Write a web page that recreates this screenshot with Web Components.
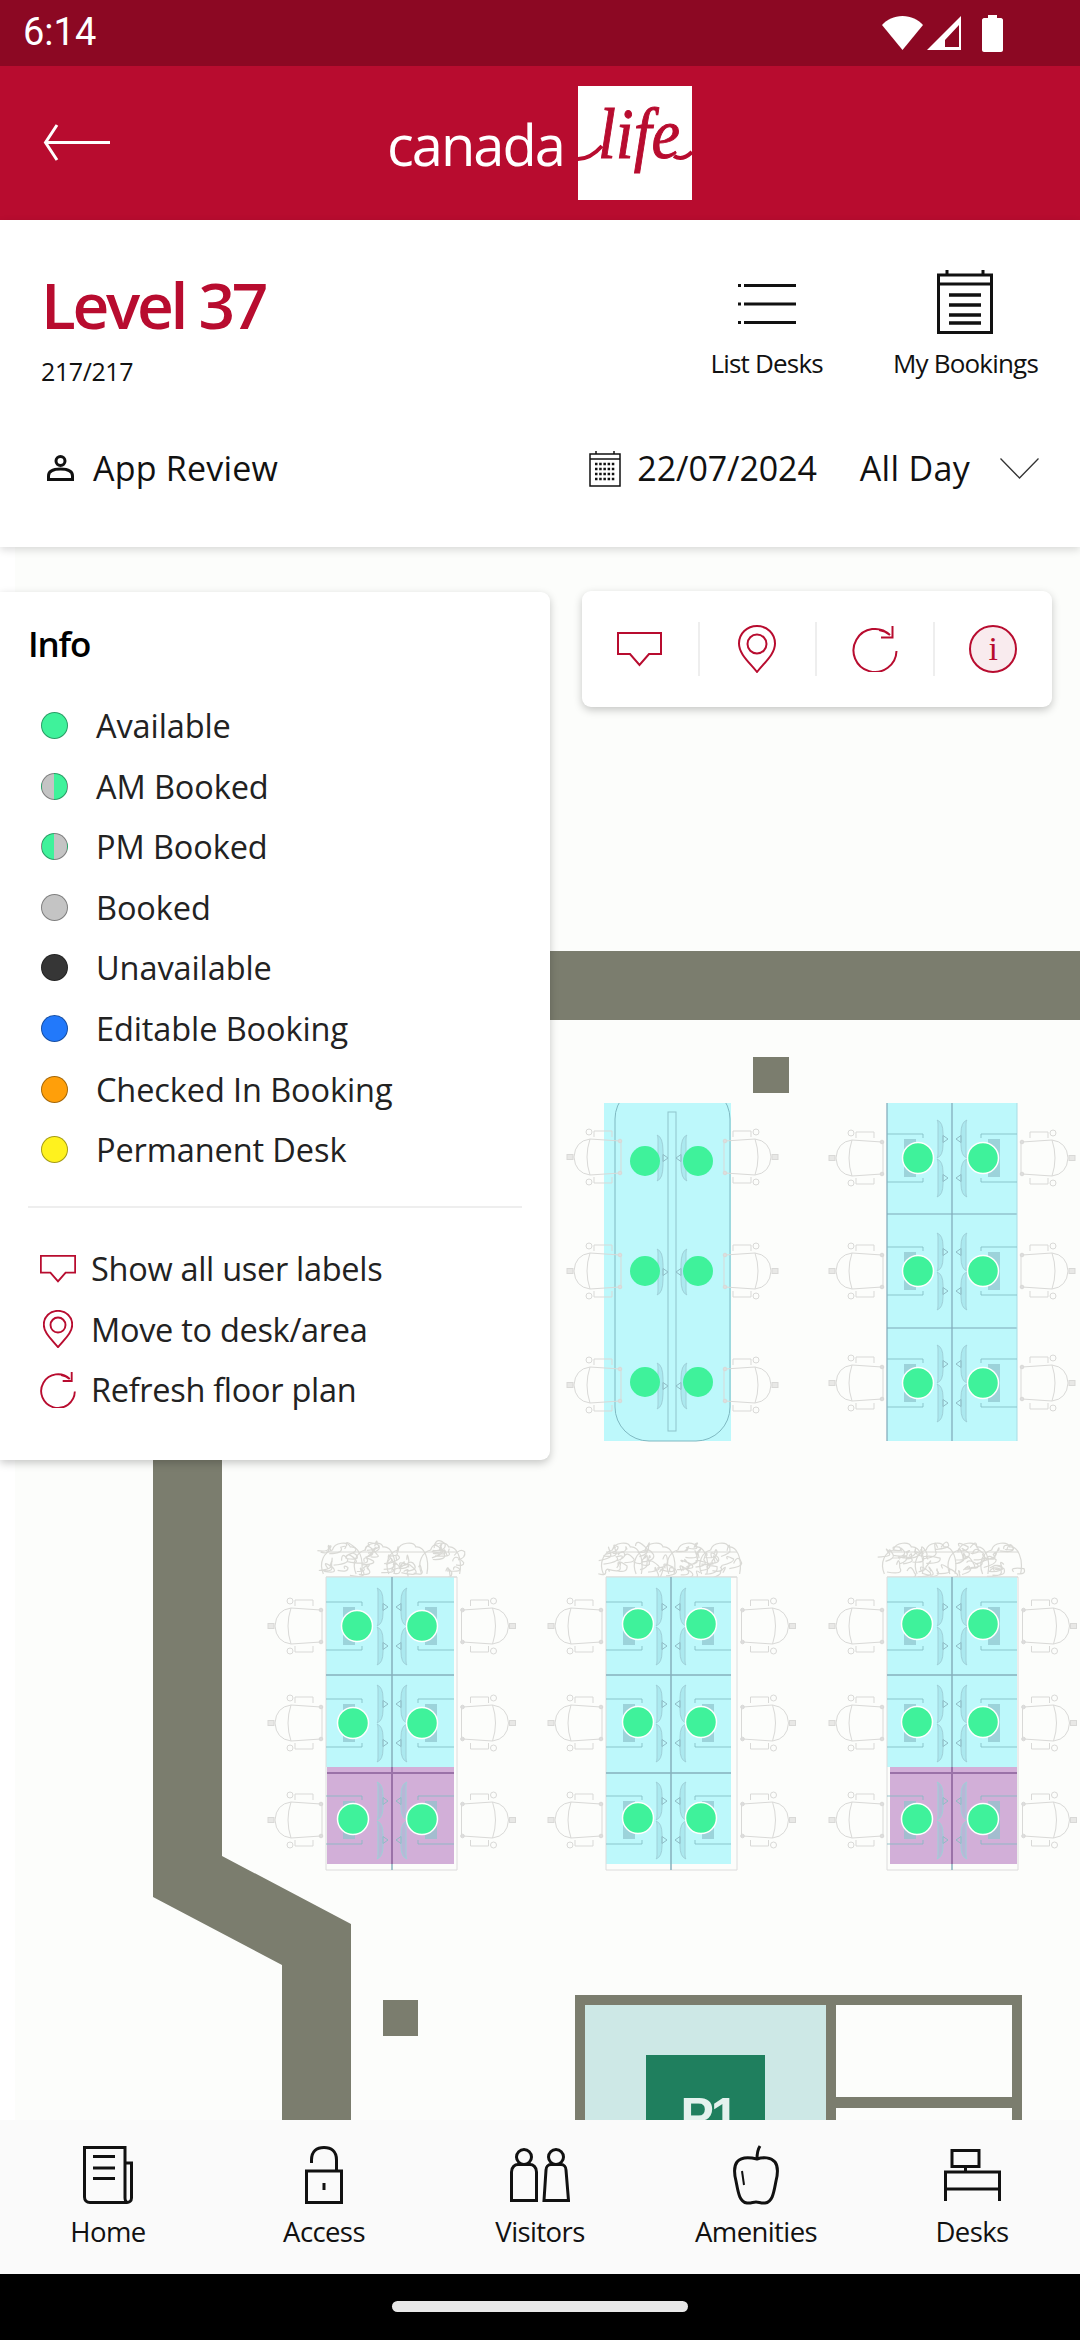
<!DOCTYPE html>
<html>
<head>
<meta charset="utf-8">
<style>
  html, body { margin: 0; padding: 0; background: #fff; }
  body { width: 1080px; height: 2340px; overflow: hidden; font-family: "Open Sans", "Noto Sans", sans-serif; }
  app-shell { --red: #b80c2f; }
</style>
</head>
<body>
<app-shell>
  <status-bar slot="top"></status-bar>
  <app-header slot="top"></app-header>
  <level-panel slot="top"></level-panel>
  <floor-map slot="map">
    <info-panel>
      <legend-row kind="available">Available</legend-row>
      <legend-row kind="am">AM Booked</legend-row>
      <legend-row kind="pm">PM Booked</legend-row>
      <legend-row kind="booked">Booked</legend-row>
      <legend-row kind="unavailable">Unavailable</legend-row>
      <legend-row kind="editable">Editable Booking</legend-row>
      <legend-row kind="checked">Checked In Booking</legend-row>
      <legend-row kind="permanent">Permanent Desk</legend-row>
    </info-panel>
    <map-toolbar></map-toolbar>
  </floor-map>
  <bottom-nav slot="bottom"></bottom-nav>
  <gesture-bar slot="bottom"></gesture-bar>
</app-shell>

<script>
const TEXT_FONT = '"Open Sans", "Noto Sans", sans-serif';

const ICONS = {
  bubble: '<svg viewBox="0 0 45 35" width="45" height="35" fill="none" stroke="#b80c2f" stroke-width="2"><path d="M1 1H44V22H32L22.500 33L13 22H1Z"/></svg>',
  pin: '<svg viewBox="0 0 38 48" width="38" height="48" fill="none" stroke="#b80c2f" stroke-width="2"><path d="M19 47C11 37 1 29 1 18.500C1 8.500 9 1 19 1S37 8.500 37 18.500C37 29 27 37 19 47Z"/><circle cx="19" cy="19" r="9.500"/></svg>',
  refresh: '<svg viewBox="0 0 46 46" width="46" height="46" fill="none" stroke="#b80c2f" stroke-width="2"><path d="M44.500 25A21.500 21.500 0 1 1 38 9C35 6.500 31 4.500 27 4"/><path d="M40.500 0V11.500H29"/></svg>'
};

class AppShell extends HTMLElement {
  constructor() {
    super();
    this.attachShadow({ mode: 'open' });
    this.shadowRoot.innerHTML = `
      <style>
        :host { display: flex; flex-direction: column; width: 1080px; height: 2340px; }
        .top { flex: none; position: relative; z-index: 3; }
        .map { flex: 1; min-height: 0; display: flex; position: relative; z-index: 1; }
        .bottom { flex: none; position: relative; z-index: 2; }
      </style>
      <div class="top"><slot name="top"></slot></div>
      <div class="map"><slot name="map"></slot></div>
      <div class="bottom"><slot name="bottom"></slot></div>
    `;
  }
}

class StatusBar extends HTMLElement {
  constructor() {
    super();
    this.attachShadow({ mode: 'open' });
    this.shadowRoot.innerHTML = `
      <style>
        :host { display: flex; align-items: center; justify-content: space-between; height: 66px; background: #8c0823; color: #fff; padding: 0 77px 0 23px; box-sizing: border-box; }
        .time { font: 400 38px Roboto, sans-serif; position: relative; top: -1px; }
        .icons { display: flex; align-items: center; gap: 4px; }
        svg { display: block; }
      </style>
      <span class="time">6:14</span>
      <div class="icons">
        <svg width="41" height="34" viewBox="0 0 41 34" fill="#fff"><path d="M20.500 34L0 9C5 3.500 12 0 20.500 0S36 3.500 41 9Z"/></svg>
        <svg width="35" height="34" viewBox="0 0 35 34" fill="#fff" fill-rule="evenodd"><path d="M34 0V34H0ZM32 9L18 24V31H32Z"/></svg>
        <svg width="21" height="37" viewBox="0 0 21 37" fill="#fff" style="margin-left:16px"><path d="M6 0H15V3H19C20 3 21 4 21 5V35C21 36 20 37 19 37H2C1 37 0 36 0 35V5C0 4 1 3 2 3H6Z"/></svg>
      </div>
    `;
  }
}

class AppHeader extends HTMLElement {
  constructor() {
    super();
    this.attachShadow({ mode: 'open' });
    this.shadowRoot.innerHTML = `
      <style>
        :host { display: flex; align-items: center; height: 154px; background: var(--red); padding-left: 43px; box-sizing: border-box; position: relative; }
        .logo { display: flex; align-items: center; margin-left: 277px; gap: 14px; }
        .word { font: 500 56px ${TEXT_FONT}; color: #fff; position: relative; top: 1px; letter-spacing: -2px; }
        svg { display: block; }
      </style>
      <svg width="67" height="38" viewBox="0 0 67 38" fill="none" stroke="#fff" stroke-width="3"><path d="M67 18.500H3M14 1L2.500 18.500L14 36"/></svg>
      <div class="logo">
        <span class="word">canada</span>
        <svg width="114" height="114" viewBox="0 0 114 114">
          <rect width="114" height="114" fill="#fff"/>
          <path d="M0 73C9 73 16 69 24 60M96 70C102 74 108 72 114 66" fill="none" stroke="#b80c2f" stroke-width="4"/>
          <text x="20" y="72" font-family="Liberation Serif, serif" font-style="italic" font-size="72" fill="#b80c2f" stroke="#b80c2f" stroke-width="1" textLength="82" lengthAdjust="spacingAndGlyphs">life</text>
        </svg>
      </div>
    `;
  }
}

class LevelPanel extends HTMLElement {
  constructor() {
    super();
    this.attachShadow({ mode: 'open' });
    this.shadowRoot.innerHTML = `
      <style>
        :host { display: flex; flex-direction: column; height: 327px; background: #fff; box-sizing: border-box; box-shadow: 0 3px 8px rgba(0,0,0,.14); position: relative; color: #111; font-family: ${TEXT_FONT}; }
        .head { display: flex; justify-content: space-between; padding: 49px 42px 0 41px; height: 221px; box-sizing: border-box; }
        h1 { margin: 0; font-size: 64px; font-weight: 600; color: var(--red); line-height: 72px; letter-spacing: -3.300px; }
        .count { font-size: 25px; line-height: 32px; margin-top: 14px; letter-spacing: -.4px; }
        .actions { display: flex; gap: 70px; align-items: flex-start; }
        .action { display: flex; flex-direction: column; align-items: center; font-size: 26px; letter-spacing: -.8px; white-space: nowrap; }
        .action .ico { height: 65px; display: flex; align-items: center; margin-bottom: 11px; }
        .list { position: relative; top: 2px; }
        .row { display: flex; align-items: center; padding: 0 41px 0 47px; height: 54px; font-size: 34px; }
        .person { margin-right: 19px; }
        .review { letter-spacing: .2px; }
        .cal { margin-left: auto; margin-right: 16px; }
        .date { margin-right: 43px; letter-spacing: -.1px; }
        .day { letter-spacing: .3px; }
        .chev { margin-left: 30px; }
        svg { display: block; }
      </style>
      <div class="head">
        <div>
          <h1>Level 37</h1>
          <div class="count">217/217</div>
        </div>
        <div class="actions">
          <div class="action">
            <div class="ico">
              <svg class="list" width="58" height="40" viewBox="0 0 58 40" stroke="#111" stroke-width="3"><path d="M6 1.500H58M6 20H58M6 38.500H58M0 1.500H3M0 20H3M0 38.500H3"/></svg>
            </div>
            List Desks
          </div>
          <div class="action">
            <div class="ico">
              <svg width="56" height="64" viewBox="0 0 56 64" fill="none" stroke="#111" stroke-width="3"><path d="M1.500 5H54.500V62.500H1.500ZM1.500 14H54.500M10 0V5M46 0V5"/><path d="M12 25H44M12 35H44M12 45H44M12 53H44" stroke-width="3.500"/></svg>
            </div>
            My Bookings
          </div>
        </div>
      </div>
      <div class="row">
        <svg class="person" width="27" height="26" viewBox="0 0 27 26" fill="none" stroke="#111" stroke-width="3"><circle cx="13.500" cy="6" r="4.500"/><path d="M1.500 24.500V21C1.500 16 7 14 13.500 14S25.500 16 25.500 21V24.500Z"/></svg>
        <span class="review">App Review</span>
        <svg class="cal" width="32" height="37" viewBox="0 0 32 37" fill="none" stroke="#111" stroke-width="1.500"><path d="M1 4H31V36H1ZM1 9H31M7 1V4M25 1V4"/><path d="M6 14H26M6 19H26M6 24H26M6 29H26" stroke-width="2.500" stroke-dasharray="2.500 1.700"/></svg>
        <span class="date">22/07/2024</span>
        <span class="day">All Day</span>
        <svg class="chev" width="39" height="21" viewBox="0 0 39 21" fill="none" stroke="#333" stroke-width="1.300"><path d="M.5 .5L19.500 20L38.500 .5"/></svg>
      </div>
    `;
  }
}

// The plan is drawn in page coordinates, the viewBox starts at the top of the map (547).
function chair(x, y, flip) {
  const t = flip ? `translate(${x + 55} ${y}) scale(-1 1)` : `translate(${x} ${y})`;
  return `<use href="#chair" transform="${t}"/>`;
}

function monitor(cx, y, h, side) {
  // a thin curved screen and its stand, side -1 = left of the center line
  const a = cx + side * 14, b = cx + side * 9, m = y + h / 2;
  return `<path d="M${a} ${y + 4}Q${a} ${y} ${a + side} ${y}Q${b} ${y + 2} ${b} ${y + h * .35}V${y + h * .65}Q${b} ${y + h - 2} ${a + side} ${y + h}Q${a} ${y + h} ${a} ${y + h - 4}Z" fill="rgba(130,200,212,.3)" stroke="#9fd0d8" stroke-width="1"/>
    <path d="M${b} ${m - 3.500}V${m + 3.500}L${cx + side * 4} ${m}Z" fill="none" stroke="#8fbcc6" stroke-width="1"/>`;
}

function deskBlock(cx, left, right, cy) {
  // desk frames, phone pads and four screens of one desk row
  const top = cy - 24, bot = cy + 24;
  return `
    <path d="M${left} ${top}H${left + 36}V${top + 4}M${left} ${bot}H${left + 36}V${bot - 4}M${right} ${top}H${right - 36}V${top + 4}M${right} ${bot}H${right - 36}V${bot - 4}" fill="none" stroke="#7fb9c2" stroke-width="1" opacity=".8"/>
    <rect x="${left + 17}" y="${cy - 19}" width="12" height="38" fill="#8fc3cc" opacity=".7"/>
    <rect x="${right - 29}" y="${cy - 19}" width="12" height="38" fill="#8fc3cc" opacity=".7"/>
    ${monitor(cx, cy - 38, 38, -1)}${monitor(cx, cy + 1, 38, -1)}${monitor(cx, cy - 38, 38, 1)}${monitor(cx, cy + 1, 38, 1)}`;
}

// scribbled leaves over a planter box, seeded so every run draws the same
let seed = 17;
function rnd(n) {
  seed = (seed * 1103 + 12345) % 65536;
  return seed / 65536 * n;
}

function plants(left, right) {
  let s = `<path d="M${left} 1552H${right}M${left} 1577H${right}" stroke="#d8d8d4" stroke-width="1"/>`;
  for (let i = 0; i < 4; i++) {
    const cx = left + (right - left) * (i + .5) / 4;
    let d = '';
    for (let k = 0; k < 11; k++) {
      const x = cx - 15 + rnd(30), y = 1546 + rnd(27);
      d += `M${x.toFixed(1)} ${y.toFixed(1)}q${(rnd(14) - 7).toFixed(1)} ${(-4 - rnd(7)).toFixed(1)} ${(rnd(16) - 4).toFixed(1)} ${(rnd(8) - 4).toFixed(1)}q${(rnd(6)).toFixed(1)} ${(3 + rnd(5)).toFixed(1)} ${(-6 - rnd(8)).toFixed(1)} ${(2 + rnd(6)).toFixed(1)}`;
    }
    s += `<path d="${d}" fill="none" stroke="#d9d9d5" stroke-width="1.200"/>`;
    s += `<path d="M${cx - 19} 1574C${cx - 24} 1562 ${cx - 18} 1552 ${cx - 10} 1550C${cx - 8} 1542 ${cx + 6} 1541 ${cx + 8} 1547C${cx + 16} 1546 ${cx + 22} 1558 ${cx + 19} 1574" fill="none" stroke="#d9d9d5" stroke-width="1.200"/>`;
  }
  return s;
}

function dot(x, y, plain) {
  if (plain) return `<circle cx="${x}" cy="${y}" r="15" fill="#3ff29b"/>`;
  return `<circle cx="${x}" cy="${y}" r="15.500" fill="#3ff29b" stroke="#fff" stroke-width="1.500"/>`;
}

function lowerCluster(left, right, cx, cyanL, cyanR, purple, dots) {
  const ys = [1626, 1723, 1820];
  let s = plants(left, right);
  const w = cyanR - cyanL;
  s += `<rect x="${purple ? left : cyanL}" y="1577" width="${purple ? cyanR - left : w}" height="${purple ? 190 : 287}" fill="#bdf8fb"/>`;
  if (purple) s += `<rect x="${cyanL}" y="1767" width="${w}" height="97" fill="#d2afd8"/>`;
  s += `<path d="M${left} 1577H${right}M${left} 1870H${right}M${left} 1577V1870M${right} 1577V1870" stroke="#dcdcdc" stroke-width="1" fill="none"/>`;
  s += `<path d="M${cx} 1577V1870M${left} 1675H${cyanR}" stroke="#86b0bd" stroke-width="1.500" fill="none"/>`;
  s += purple ? `<path d="M${cyanL} 1773H${cyanR}M${cx} 1767V1864" stroke="#9a72a8" stroke-width="2" fill="none"/>`
              : `<path d="M${left} 1773H${cyanR}" stroke="#86b0bd" stroke-width="1.500" fill="none"/>`;
  ys.forEach(y => { s += deskBlock(cx, left, cyanR, y); });
  ys.forEach(y => { s += chair(left - 58, y) + chair(right + 3.500, y, true); });
  dots.forEach(d => { s += dot(d[0], d[1]); });
  return s;
}

function buildPlan() {
  let s = '';
  // walls and pillars
  s += '<path d="M500 951H1080V1020H500Z" fill="#7b7d6e"/>';
  s += '<rect x="753" y="1057" width="36" height="36" fill="#7b7d6e"/>';
  s += '<rect x="383" y="2000" width="35" height="36" fill="#7b7d6e"/>';
  s += '<path d="M153 1440H222V1856L351 1924V2140H282V1965L153 1897Z" fill="#7b7d6e"/>';
  // room with the P1 sign
  s += '<rect x="575" y="1995" width="447" height="145" fill="#7b7d6e"/>';
  s += '<rect x="585" y="2005" width="241" height="135" fill="#cde8e6"/>';
  s += '<rect x="836" y="2005" width="176" height="92" fill="#fcfdfb"/>';
  s += '<rect x="836" y="2108" width="176" height="32" fill="#fcfdfb"/>';
  s += '<rect x="646" y="2055" width="119" height="85" fill="#1f7f5e"/>';
  s += `<text x="708" y="2133" text-anchor="middle" font-family="Liberation Sans, sans-serif" font-weight="700" font-size="50" letter-spacing="-3" fill="#e4f2ee">P1</text>`;

  // rounded table, top left of the map
  s += '<rect x="604" y="1103" width="127" height="338" fill="#bdf8fb"/>';
  s += '<rect x="615" y="1085" width="115" height="356" rx="34" ry="34" fill="none" stroke="#7fb9c2" stroke-width="1"/>';
  s += '<rect x="600" y="1080" width="140" height="23" fill="#fcfdfb"/>';
  s += '<rect x="668" y="1112" width="8" height="319" fill="none" stroke="#8fc4cc" stroke-width="1"/>';
  [1157, 1271, 1385].forEach(y => {
    s += chair(567, y) + chair(723, y, true);
    s += monitor(672, y - 22, 46, -1) + monitor(672, y - 22, 46, 1);
  });
  [[645, 1161], [698, 1161], [645, 1271], [698, 1271], [645, 1382], [698, 1382]].forEach(d => { s += dot(d[0], d[1], true); });

  // four seat blocks, top right
  s += '<rect x="887" y="1103" width="130" height="338" fill="#bdf8fb"/>';
  s += '<path d="M887 1103V1441M952 1103V1441M887 1214H1017M887 1328H1017" fill="none" stroke="#7fa8b8" stroke-width="1.200"/>';
  s += '<path d="M1017 1103V1441" stroke="#a8dde4" stroke-width="1"/>';
  [1158, 1271, 1383].forEach(y => {
    s += deskBlock(952, 887, 1017, y);
    s += chair(829, y) + chair(1020, y, true);
    s += dot(918, y) + dot(983, y);
  });

  s += lowerCluster(326, 457, 392, 327, 454, true, [[357, 1626], [422, 1626], [353, 1723], [422, 1723], [353, 1819], [422, 1819]]);
  s += lowerCluster(606, 737, 671, 606, 731, false, [[638, 1624], [701, 1624], [638, 1722], [701, 1722], [638, 1818], [701, 1818]]);
  s += lowerCluster(887, 1018, 952, 890, 1017, true, [[917, 1624], [983, 1624], [917, 1722], [983, 1722], [917, 1819], [983, 1819]]);
  return s;
}

class FloorMap extends HTMLElement {
  constructor() {
    super();
    this.attachShadow({ mode: 'open' });
    this.shadowRoot.innerHTML = `
      <style>
        :host { display: block; flex: 1; position: relative; overflow: hidden; background: #fff; }
        .plan { position: absolute; left: 0; top: 0; }
      </style>
      <svg class="plan" width="1080" height="1573" viewBox="0 547 1080 1573">
        <defs>
          <g id="chair" fill="none" stroke="#d9d9d7" stroke-width="1">
            <rect x="0" y="-2.500" width="6" height="5" fill="#e8e8e6"/>
            <path d="M23 -18Q8 -16 7 0Q8 16 23 18"/>
            <path d="M23 -18Q17 0 23 18M23 -18L53 -16M23 18L53 16M54 -16V16"/>
            <path d="M27 -20V-26H45V-20M27 20V26H45V20"/>
            <circle cx="22" cy="-25" r="3"/><circle cx="22" cy="25" r="3"/>
            <circle cx="53" cy="-16" r="1.800" fill="#ddd"/><circle cx="53" cy="16" r="1.800" fill="#ddd"/>
          </g>
        </defs>
        <rect x="15" y="547" width="1065" height="1573" fill="#fcfdfb"/>
        ${buildPlan()}
      </svg>
      <slot></slot>
    `;
  }
}

class InfoPanel extends HTMLElement {
  constructor() {
    super();
    this.attachShadow({ mode: 'open' });
    this.shadowRoot.innerHTML = `
      <style>
        :host { display: block; position: absolute; left: 0; top: 45px; width: 550px; height: 868px; box-sizing: border-box; background: #fff; border-radius: 0 9px 9px 0; box-shadow: 0 3px 8px rgba(0,0,0,.22); padding: 29px 28px 0 28px; color: #222; font-family: ${TEXT_FONT}; }
        h2 { margin: 0 0 28.200px; font-size: 35px; line-height: 46px; font-weight: 600; color: #000; letter-spacing: -1.200px; }
        hr { border: 0; height: 2px; background: #eeeeee; margin: 26.500px 0 30px; }
        .tool { display: flex; align-items: center; height: 60.500px; font-size: 32.500px; letter-spacing: -.3px; white-space: nowrap; }
        .tool .ico { width: 63px; flex: none; padding-left: 12px; box-sizing: border-box; }
        .ico svg { display: block; }
      </style>
      <h2>Info</h2>
      <slot></slot>
      <hr>
      <div class="tool"><span class="ico"><svg width="36" height="28" viewBox="0 0 45 35" fill="none" stroke="#b80c2f" stroke-width="2.400"><path d="M1 1H44V22H32L22.500 33L13 22H1Z"/></svg></span>Show all user labels</div>
      <div class="tool"><span class="ico"><svg width="30" height="38" viewBox="0 0 38 48" fill="none" stroke="#b80c2f" stroke-width="2.400" style="margin-left:3px"><path d="M19 47C11 37 1 29 1 18.500C1 8.500 9 1 19 1S37 8.500 37 18.500C37 29 27 37 19 47Z"/><circle cx="19" cy="19" r="9.500"/></svg></span>Move to desk/area</div>
      <div class="tool"><span class="ico"><svg width="36" height="36" viewBox="0 0 46 46" fill="none" stroke="#b80c2f" stroke-width="2.400"><path d="M44.500 25A21.500 21.500 0 1 1 38 9C35 6.500 31 4.500 27 4"/><path d="M40.500 0V11.500H29"/></svg></span>Refresh floor plan</div>
    `;
  }
}

class LegendRow extends HTMLElement {
  constructor() {
    super();
    this.attachShadow({ mode: 'open' });
    const fills = {
      available: '#3ff29b',
      am: 'linear-gradient(90deg, #c4c4c4 50%, #3ff29b 50%)',
      pm: 'linear-gradient(90deg, #3ff29b 50%, #c4c4c4 50%)',
      booked: '#c4c4c4',
      unavailable: '#363636',
      editable: '#2279fb',
      checked: '#ff9f0a',
      permanent: '#fff21e'
    };
    const fill = fills[this.getAttribute('kind')] || '#ccc';
    this.shadowRoot.innerHTML = `
      <style>
        :host { display: flex; align-items: center; height: 60.600px; font-size: 32.500px; letter-spacing: -.1px; }
        .dot { width: 25px; height: 25px; margin: 0 28px 0 13px; border-radius: 50%; border: 1px solid rgba(0,0,0,.35); background: ${fill}; flex: none; }
      </style>
      <span class="dot"></span><slot></slot>
    `;
  }
}

class MapToolbar extends HTMLElement {
  constructor() {
    super();
    this.attachShadow({ mode: 'open' });
    this.shadowRoot.innerHTML = `
      <style>
        :host { display: grid; grid-template-columns: repeat(4, 1fr); align-items: center; position: absolute; left: 582px; top: 44px; width: 470px; height: 116px; background: #fff; border-radius: 9px; box-shadow: 0 3px 8px rgba(0,0,0,.22); }
        .cell { display: flex; align-items: center; justify-content: center; height: 54px; border-right: 2px solid #eeeeee; }
        .cell:last-child { border-right: 0; }
        .info { width: 48px; height: 48px; border-radius: 50%; border: 2px solid var(--red); box-sizing: border-box; background: #f9ebee; color: var(--red); display: flex; align-items: center; justify-content: center; font: 400 34px "Liberation Serif", serif; }
        svg { display: block; }
      </style>
      <div class="cell">${ICONS.bubble}</div>
      <div class="cell">${ICONS.pin}</div>
      <div class="cell">${ICONS.refresh}</div>
      <div class="cell"><div class="info">i</div></div>
    `;
  }
}

class BottomNav extends HTMLElement {
  constructor() {
    super();
    this.attachShadow({ mode: 'open' });
    this.shadowRoot.innerHTML = `
      <style>
        :host { display: grid; grid-template-columns: repeat(5, 1fr); height: 154px; background: #fafafa; font-family: ${TEXT_FONT}; color: #111; }
        .item { display: flex; flex-direction: column; align-items: center; font-size: 27.500px; letter-spacing: -.6px; padding-top: 25px; box-sizing: border-box; }
        .ico { height: 60px; margin-bottom: 8px; display: flex; align-items: center; }
        svg { display: block; }
      </style>
      <div class="item"><div class="ico">
        <svg width="50" height="58" viewBox="0 0 50 58" fill="none" stroke="#111" stroke-width="3"><path d="M42 17H48.500V52C48.500 55 46 56.500 44 56.500H7C3.500 56.500 1.500 54 1.500 51V1.500H42V52C42 55 43.500 56.500 44.500 56.500"/><path d="M10 10.500H32M10 22H32M10 32.500H32"/></svg>
      </div>Home</div>
      <div class="item"><div class="ico">
        <svg width="38" height="58" viewBox="0 0 38 58" fill="none" stroke="#111" stroke-width="3"><path d="M6.500 17V14C6.500 5 12 1.500 19 1.500S31.500 5 31.500 14V25"/><path d="M1.500 25H36.500V56.500H1.500Z"/><path d="M19 37V44" stroke-width="3"/></svg>
      </div>Access</div>
      <div class="item"><div class="ico">
        <svg width="60" height="54" viewBox="0 0 60 54" fill="none" stroke="#111" stroke-width="3"><circle cx="14" cy="9" r="7.500"/><path d="M1.500 52.500V24C1.500 19 5 16.500 8 16.500H20C23 16.500 26.500 19 26.500 24V52.500Z"/><circle cx="46" cy="9" r="7.500"/><path d="M34 52.500L36 22C36 19 38 16.500 41 16.500H51C54 16.500 56 19 56 22L58.500 52.500Z"/></svg>
      </div>Visitors</div>
      <div class="item"><div class="ico">
        <svg width="46" height="60" viewBox="0 0 46 60" fill="none" stroke="#111" stroke-width="3"><path d="M24 14C24 8 25 4 27 1"/><path d="M24 14C30 12 38 12 42 17C45 21 45 28 43 36C41 46 40 57 32 58C28 58.500 26 57 23 57S18 58.500 14 58C6 57 5 46 3 36C1 28 1 21 4 17C8 12 16 12 24 14Z"/><path d="M9 26L11 40" stroke-width="2"/></svg>
      </div>Amenities</div>
      <div class="item"><div class="ico">
        <svg width="57" height="52" viewBox="0 0 57 52" fill="none" stroke="#111" stroke-width="3"><path d="M8 1.500H35V17.500H8ZM21.500 17.500V23"/><path d="M1.500 52V23H55.500V52M1.500 40H55.500"/></svg>
      </div>Desks</div>
    `;
  }
}

class GestureBar extends HTMLElement {
  constructor() {
    super();
    this.attachShadow({ mode: 'open' });
    this.shadowRoot.innerHTML = `
      <style>
        :host { display: flex; justify-content: center; height: 66px; background: #000; padding-top: 27px; box-sizing: border-box; }
        div { width: 296px; height: 11px; border-radius: 6px; background: #e8e8e8; }
      </style>
      <div></div>
    `;
  }
}

customElements.define('app-shell', AppShell);
customElements.define('status-bar', StatusBar);
customElements.define('app-header', AppHeader);
customElements.define('level-panel', LevelPanel);
customElements.define('floor-map', FloorMap);
customElements.define('info-panel', InfoPanel);
customElements.define('legend-row', LegendRow);
customElements.define('map-toolbar', MapToolbar);
customElements.define('bottom-nav', BottomNav);
customElements.define('gesture-bar', GestureBar);
</script>
</body>
</html>
